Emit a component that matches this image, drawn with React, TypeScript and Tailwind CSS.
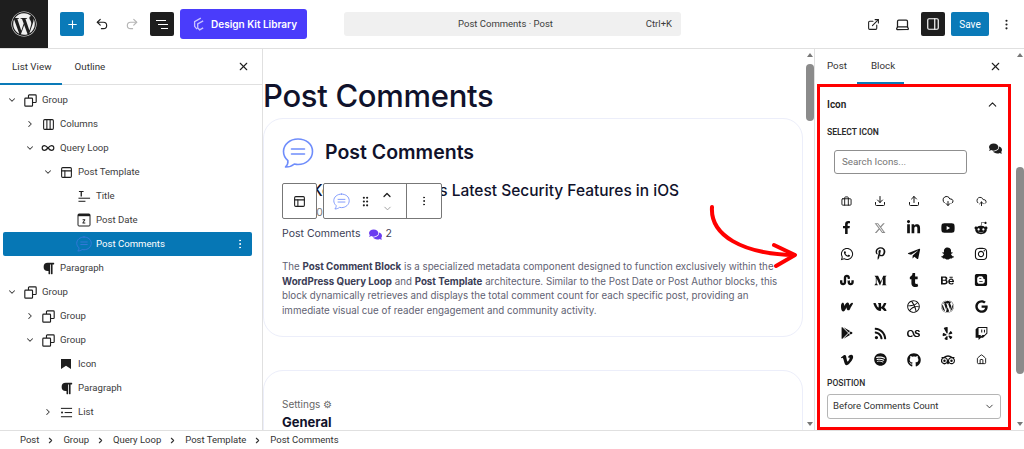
import type { ReactNode } from 'react';
import { ChevronDown, ChevronRight, ChevronUp, Columns3, Download, ExternalLink, House, Infinity as InfinityIcon, Laptop, MoreVertical, PanelRight, PanelsTopLeft, Plus, Redo2, Undo2, Upload, X, Briefcase, CloudDownload, CloudUpload, GripVertical } from 'lucide-react';
import {
  FaBehance, FaBlogger, FaComments, FaDribbble, FaFacebookF, FaGithub, FaGooglePlay, FaInstagram, FaLastfm,
  FaLinkedinIn, FaMediumM, FaParagraph, FaPinterestP, FaRedditAlien, FaRss, FaSnapchatGhost, FaSpotify, FaStumbleupon,
  FaTelegramPlane, FaTripadvisor, FaTumblr, FaTwitch, FaVimeoV, FaVk, FaWhatsapp, FaWordpress, FaYelp, FaYoutube,
} from 'react-icons/fa';
import { FaGoogle, FaXTwitter } from 'react-icons/fa6';
import { SiWattpad } from 'react-icons/si';

const GroupIcon = () => (
  <svg viewBox="0 0 16 16" className="w-[13px] h-[13px]" fill="none" stroke="currentColor" strokeWidth="1.4">
    <rect x="1" y="5" width="9.5" height="10" rx="1" />
    <path d="M5.5 5V2a1 1 0 0 1 1-1H14a1 1 0 0 1 1 1v7.5a1 1 0 0 1-1 1h-3.5" />
  </svg>
);
const TitleIcon = () => (
  <svg viewBox="0 0 14 14" className="w-[13px] h-[13px]" fill="currentColor">
    <path d="M1 1h5v1.2H4.2V7H2.8V2.2H1z" />
    <rect x="0.5" y="8.3" width="12.5" height="1.1" />
    <rect x="0.5" y="11.6" width="7.5" height="1.1" />
  </svg>
);
const DateIcon = () => (
  <svg viewBox="0 0 14 14" className="w-[14px] h-[14px]">
    <rect x="1" y="1" width="12" height="12" rx="1" fill="none" stroke="currentColor" strokeWidth="1" />
    <rect x="1" y="1" width="12" height="2.2" fill="currentColor" />
    <path d="M5.6 6.3h2.6v1L6.5 9.6h1.8v.8H5.5v-.8l1.7-2.4H5.6z" fill="currentColor" />
  </svg>
);
const ListIcon = () => (
  <svg viewBox="0 0 14 14" className="w-[13px] h-[13px]" fill="currentColor">
    <rect x="1" y="2" width="12" height="1.1" />
    <circle cx="2.2" cy="7" r="1.1" />
    <rect x="5" y="6.5" width="8" height="1.1" />
    <rect x="1" y="11" width="12" height="1.1" />
  </svg>
);
const BookmarkIcon = () => (
  <svg viewBox="0 0 10 10" className="w-[10px] h-[10px]" fill="currentColor">
    <path d="M0 0h10v10L5 6.8 0 10z" />
  </svg>
);
const BubbleIcon = ({ className, stroke = '#6f8dfb' }: { className: string; stroke?: string }) => (
  <svg viewBox="0 0 32 32" className={className} fill="none" stroke={stroke} strokeWidth="1.6" strokeLinecap="round" strokeLinejoin="round">
    <path d="M16 2C8 2 1.5 7.4 1.5 14.5c0 3.6 1.7 6.8 4.4 9.1.3 2.3-.7 4.7-2.4 6.4 3.4.1 6.5-1 8.8-3 1.2.3 2.4.5 3.7.5 8 0 14.5-5.6 14.5-13S24 2 16 2z" />
    <path d="M9.5 12h13M9.5 17h13" />
  </svg>
);
const Kit = () => (
  <svg viewBox="0 0 16 18" className="w-[13px] h-[14px]" fill="none" stroke="#c9c4ff" strokeWidth="1.7">
    <path d="M11 1.5 3 6v6l3 3.5M14 5l-7 4v5l2.5 2.5L14 14" />
  </svg>
);

type TreeRow = { level: number; label: string; icon: ReactNode; open?: boolean; closed?: boolean; selected?: boolean };

const levelClass = ['pl-0', 'pl-[18px]', 'pl-[36px]', 'pl-[54px]'];

const tree: TreeRow[] = [
  { level: 0, label: 'Group', icon: <GroupIcon />, open: true },
  { level: 1, label: 'Columns', icon: <Columns3 size={13} />, closed: true },
  { level: 1, label: 'Query Loop', icon: <InfinityIcon size={14} />, open: true },
  { level: 2, label: 'Post Template', icon: <PanelsTopLeft size={13} />, open: true },
  { level: 3, label: 'Title', icon: <TitleIcon /> },
  { level: 3, label: 'Post Date', icon: <DateIcon /> },
  { level: 3, label: 'Post Comments', icon: <BubbleIcon className="w-[16px] h-[16px]" stroke="#3f78e0" />, selected: true },
  { level: 1, label: 'Paragraph', icon: <FaParagraph size={13} /> },
  { level: 0, label: 'Group', icon: <GroupIcon />, open: true },
  { level: 1, label: 'Group', icon: <GroupIcon />, closed: true },
  { level: 1, label: 'Group', icon: <GroupIcon />, open: true },
  { level: 2, label: 'Icon', icon: <BookmarkIcon /> },
  { level: 2, label: 'Paragraph', icon: <FaParagraph size={13} /> },
  { level: 2, label: 'List', icon: <ListIcon />, closed: true },
  { level: 0, label: '', icon: <TitleIcon /> },
];

const iconRows: ReactNode[][] = [
  [<Briefcase size={11} />, <Download size={12} />, <Upload size={12} />, <CloudDownload size={12} />, <CloudUpload size={11} />],
  [<FaFacebookF size={13} />, <FaXTwitter size={12} className="text-[#8a8a8a]" />, <FaLinkedinIn size={15} />, <FaYoutube size={14} />, <FaRedditAlien size={14} />],
  [<FaWhatsapp size={14} />, <FaPinterestP size={13} />, <FaTelegramPlane size={14} />, <FaSnapchatGhost size={13} />, <FaInstagram size={14} />],
  [<FaStumbleupon size={14} />, <FaMediumM size={13} />, <FaTumblr size={14} />, <FaBehance size={13} />, <FaBlogger size={14} />],
  [<SiWattpad size={12} />, <FaVk size={14} />, <FaDribbble size={13} />, <FaWordpress size={13} />, <FaGoogle size={13} />],
  [<FaGooglePlay size={12} />, <FaRss size={13} />, <FaLastfm size={13} />, <FaYelp size={13} />, <FaTwitch size={13} />],
  [<FaVimeoV size={14} />, <FaSpotify size={13} />, <FaGithub size={14} />, <FaTripadvisor size={14} />, <House size={11} />],
];

const Row = ({ row }: { row: TreeRow }) => (
  <div className={`ml-[3px] mr-[10px] h-6 flex items-center shrink-0 rounded-[2px] ${levelClass[row.level]} ${row.selected ? 'bg-[#0677b5] text-white' : 'text-[#3c3c3c]'}`}>
    <span className="w-[18px] flex justify-center">
      {row.open && <ChevronDown size={10} strokeWidth={2.5} />}
      {row.closed && <ChevronRight size={10} strokeWidth={2.5} />}
    </span>
    <span className="w-[18px] flex justify-center text-[#1e1e1e]">{row.icon}</span>
    <span className="ml-[3px] text-[9.6px] flex-1">{row.label}</span>
    {row.selected && <MoreVertical size={12} className="mr-[6px]" />}
  </div>
);

const ScrollBar = ({ spacer, thumb }: { spacer: string; thumb: string }) => (
  <div className="w-2 shrink-0 flex flex-col items-center bg-white">
    <div className="h-3 flex items-center"><div className="w-0 h-0 border-x-[3px] border-x-transparent border-b-[4px] border-b-[#777]" /></div>
    <div className={spacer} />
    <div className={`w-2 rounded-[4px] bg-[#8b8b8b] ${thumb}`} />
    <div className="flex-1" />
    <div className="h-3 flex items-center"><div className="w-0 h-0 border-x-[3px] border-x-transparent border-t-[4px] border-t-[#777]" /></div>
  </div>
);

export default function App() {
  return (
    <div className="relative w-[1024px] h-[449px] flex flex-col overflow-hidden bg-white text-[#1e1e1e] font-['Roboto','Noto_Sans',sans-serif]">
      {/* Top bar */}
      <header className="h-[49px] shrink-0 flex items-center border-b border-[#e0e0e0]">
        <div className="w-12 h-12 bg-[#1e1e1e] flex items-center justify-center text-[#f0f0f0]"><FaWordpress size={26} /></div>
        <div className="ml-3 w-6 h-6 rounded-[2px] bg-[#0a7ab8] flex items-center justify-center text-white"><Plus size={13} /></div>
        <Undo2 size={14} className="ml-[11px]" />
        <Redo2 size={14} className="ml-[16px] text-[#b5b5b5]" />
        <div className="ml-[11px] w-6 h-6 rounded-[2px] bg-[#1e1e1e] flex flex-col justify-center gap-[3px] pl-[6px]">
          <span className="h-px w-[10px] bg-white" />
          <span className="h-px w-[10px] ml-[2px] bg-white" />
          <span className="h-px w-[7px] ml-[5px] bg-white" />
        </div>
        <div className="ml-[6px] w-[127px] h-[30px] rounded-[3px] bg-[#4a3cfb] flex items-center pl-[12px] gap-[6px] text-white text-[10px] font-semibold font-['Inter',sans-serif]">
          <Kit />Design Kit Library
        </div>
        <div className="ml-[37px] w-[337px] h-6 rounded-[3px] bg-[#f0f0f0] flex items-center text-[9.5px] text-[#3c3c3c] relative">
          <span className="w-full text-center pr-[14px]">Post Comments · Post</span>
          <span className="absolute right-[9px]">Ctrl+K</span>
        </div>
        <ExternalLink size={13} className="ml-[186px]" />
        <Laptop size={15} className="ml-[15px]" />
        <div className="ml-[11px] w-6 h-6 rounded-[2px] bg-[#1e1e1e] flex items-center justify-center text-white"><PanelRight size={14} /></div>
        <div className="ml-[6px] w-[38px] h-6 rounded-[2px] bg-[#0a7ab8] flex items-center justify-center text-white text-[10px]">Save</div>
        <MoreVertical size={13} className="ml-[11px]" />
      </header>

      <div className="flex-1 min-h-0 flex">
        {/* List view */}
        <aside className="w-[263px] shrink-0 flex flex-col border-r border-[#e0e0e0] overflow-hidden">
          <div className="h-[36px] shrink-0 flex items-center border-b border-[#e0e0e0] relative text-[9.8px] text-[#333]">
            <span className="ml-3 mt-[1px]">List View</span>
            <span className="ml-[23px] mt-[1px]">Outline</span>
            <X size={13} className="ml-auto mr-[12px] text-[#1e1e1e]" />
            <span className="absolute left-0 bottom-[-1px] w-[62px] h-[2px] bg-[#0a7ab8]" />
          </div>
          <div className="pt-[3px] flex flex-col">
            {tree.map((row, i) => <Row key={i} row={row} />)}
          </div>
        </aside>

        {/* Canvas */}
        <main className="flex-1 min-w-0 overflow-hidden font-['Inter',sans-serif] text-[#10122b]">
          <h1 className="mt-[27px] text-[31px] leading-[40px] font-medium tracking-[-0.3px]">Post Comments</h1>
          <section className="mt-[2px] w-[540px] h-[219px] rounded-[20px] border border-[#eceefa] pt-[18px] pl-[18px] pr-[10px]">
            <div className="flex items-center gap-[11px] h-[32px]">
              <BubbleIcon className="w-[32px] h-[32px]" />
              <h2 className="text-[19.5px] font-semibold">Post Comments</h2>
            </div>
            <h3 className="mt-[11px] text-[15.5px] leading-[22px] font-medium whitespace-nowrap">iOS Keep Safe With Its Latest Security Features in iOS</h3>
            <p className="mt-[4px] text-[10.5px] leading-[14px] text-[#777]">March 02, 2025</p>
            <p className="mt-[7px] flex items-center text-[10.5px] leading-[14px] text-[#3b3d55]">
              Post Comments
              <FaComments size={13} className="ml-[9px] text-[#6a3df0]" />
              <span className="ml-[3px]">2</span>
            </p>
            <p className="mt-[19px] text-[9.75px] leading-[14.7px] text-[#5f6272] whitespace-nowrap">
              The <b className="text-[#3b3d55]">Post Comment Block</b> is a specialized metadata component designed to function exclusively within the<br />
              <b className="text-[#3b3d55]">WordPress Query Loop</b> and <b className="text-[#3b3d55]">Post Template</b> architecture. Similar to the Post Date or Post Author blocks, this<br />
              block dynamically retrieves and displays the total comment count for each specific post, providing an<br />
              immediate visual cue of reader engagement and community activity.
            </p>
          </section>
          <section className="mt-[33px] w-[540px] h-[200px] rounded-[20px] border border-[#eceefa] pt-[26px] pl-[18px]">
            <p className="text-[10px] leading-[14px] text-[#666]">Settings ⚙</p>
            <p className="mt-[2px] text-[13px] leading-[18px] font-bold">General</p>
          </section>
        </main>

        <ScrollBar spacer="h-[3px]" thumb="h-[57px]" />

        {/* Inspector */}
        <aside className="w-[202px] shrink-0 flex flex-col border-l border-[#e0e0e0] overflow-hidden">
          <div className="h-[36px] shrink-0 flex items-center relative text-[9.8px] text-[#333] pb-[2px]">
            <span className="ml-[12px]">Post</span>
            <span className="ml-[24px]">Block</span>
            <X size={13} className="ml-auto mr-[14px] text-[#1e1e1e]" />
            <span className="absolute left-[42px] bottom-[1px] w-[47px] h-[2px] bg-[#0a7ab8]" />
          </div>
          <div className="pl-[12px] pr-[13px] flex-1 flex flex-col">
            <div className="mt-[12px] flex items-center justify-between text-[10px] font-semibold pr-[4px]">
              Icon <ChevronUp size={13} />
            </div>
            <p className="mt-[14px] text-[8.5px] leading-[12px] font-semibold text-[#2a2a2a]">SELECT ICON</p>
            <div className="mt-[5px] flex items-start">
              <div className="ml-[7px] mt-[7px] w-[133px] h-[24px] rounded-[3px] border border-[#8f8f8f] flex items-center pl-[7px] text-[9.8px] text-[#757575]">Search Icons...</div>
              <FaComments size={13} className="ml-[22px] mt-[-1px]" />
            </div>
            <div className="mt-[14px] ml-[3px] w-[168px] flex flex-col">
              {iconRows.map((row, r) => (
                <div key={r} className="h-[26.4px] grid grid-cols-5 items-center justify-items-center text-[#111]">
                  {row.map((icon, c) => <span key={c} className="flex">{icon}</span>)}
                </div>
              ))}
            </div>
            <p className="mt-[4px] text-[8.5px] leading-[12px] font-medium text-[#2a2a2a]">POSITION</p>
            <div className="mt-[5px] w-[174px] h-[25px] rounded-[3px] border border-[#b5b5b5] flex items-center justify-between px-[5px] text-[9.6px] text-[#333]">
              Before Comments Count <ChevronDown size={11} />
            </div>
          </div>
        </aside>

        <ScrollBar spacer="h-[106px]" thumb="h-[207px]" />
      </div>

      {/* Breadcrumbs */}
      <footer className="h-[19px] shrink-0 flex items-center pl-[20px] gap-[7px] border-t border-[#e0e0e0] bg-white text-[9.5px] text-[#333] z-10">
        {['Post', 'Group', 'Query Loop', 'Post Template', 'Post Comments'].map((crumb, i) => (
          <span key={i} className="flex items-center gap-[7px]">
            {i > 0 && <ChevronRight size={9} strokeWidth={3} className="mr-[1px]" />}
            {crumb}
          </span>
        ))}
      </footer>

      {/* Floating block toolbar */}
      <div className="absolute left-[282px] top-[183px] h-[36px] w-[35px] flex items-center justify-center rounded-[2px] border border-[#777] bg-white"><PanelsTopLeft size={13} /></div>
      <div className="absolute left-[323px] top-[183px] h-[36px] w-[119px] flex items-center rounded-[2px] border border-[#777] bg-white">
        <div className="w-[82px] flex items-center pl-[9px]">
          <BubbleIcon className="w-[17px] h-[17px]" />
          <GripVertical size={13} className="ml-[9px]" />
          <span className="ml-[9px] flex flex-col items-center gap-[2px]">
            <ChevronUp size={12} strokeWidth={2.5} />
            <ChevronDown size={11} className="text-[#999]" />
          </span>
        </div>
        <div className="flex-1 h-full border-l border-[#777] flex items-center justify-center"><MoreVertical size={12} /></div>
      </div>

      {/* Annotation: red box and arrow */}
      <div className="absolute left-[817px] top-[84px] w-[194px] h-[346px] border-[3px] border-[#f00] pointer-events-none" />
      <svg className="absolute left-[700px] top-[200px] w-[100px] h-[75px] pointer-events-none" viewBox="0 0 100 75" fill="none" stroke="#f00" strokeWidth="4" strokeLinecap="round" strokeLinejoin="round">
        <path d="M12 7c-2 28 30 47 82 48" />
        <path d="M74 45l21 10-19 11" />
      </svg>
    </div>
  );
}
